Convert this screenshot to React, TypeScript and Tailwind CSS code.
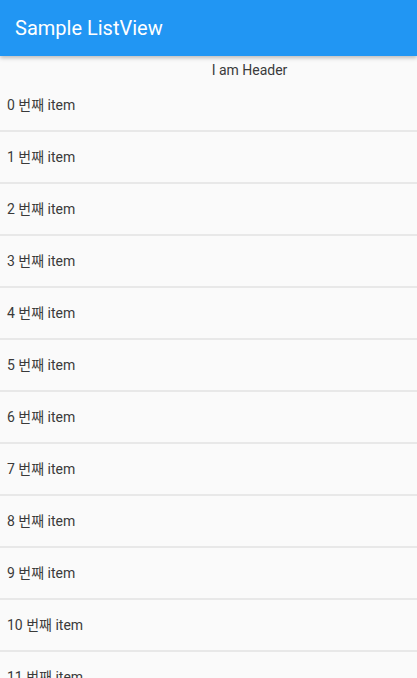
const ITEMS = Array.from({ length: 20 }, (_, i) => i);

export default function App() {
  return (
    <div
      className="h-[678px] w-[417px] overflow-hidden bg-[#fafafa] flex flex-col"
      style={{ fontFamily: 'Roboto, "Noto Sans CJK KR", sans-serif' }}
    >
      {/* App bar */}
      <div className="relative z-10 h-[56px] shrink-0 bg-[#2196f3] flex items-center px-[15px] shadow-[0_2px_4px_rgba(0,0,0,0.25)]">
        <h1 className="text-[20px] font-normal text-white leading-none">Sample ListView</h1>
      </div>

      <div className="flex flex-col">
        <div className="h-[24px] pt-[6px] pl-[82px] text-center text-[14px] leading-[17px] text-[#3a3a3a]">I am Header</div>

        {ITEMS.map((i) => (
          <div key={i}>
            <div className="h-[50px] flex items-center px-[7px] text-[14px] text-[#3a3a3a]">
              {i} 번째 item
            </div>
            <div className="h-[2px] bg-[#e8e8e8]" />
          </div>
        ))}
      </div>
    </div>
  );
}
